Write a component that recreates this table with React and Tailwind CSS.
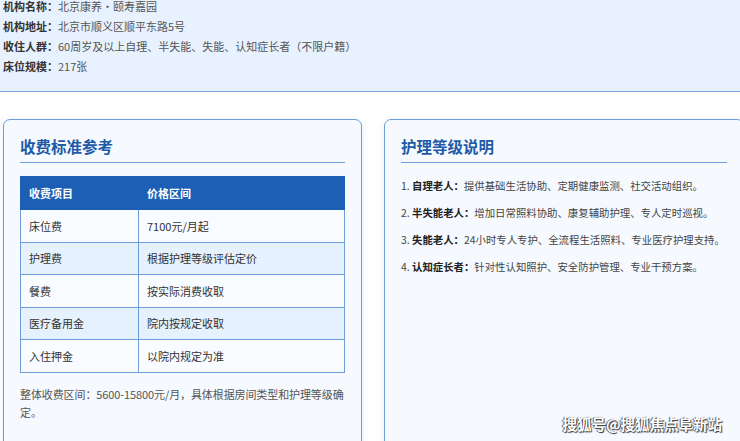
const fees = [
  { item: '床位费', price: '7100元/月起' },
  { item: '护理费', price: '根据护理等级评估定价' },
  { item: '餐费', price: '按实际消费收取' },
  { item: '医疗备用金', price: '院内按规定收取' },
  { item: '入住押金', price: '以院内规定为准' },
];

const levels = [
  { label: '自理老人：', text: '提供基础生活协助、定期健康监测、社交活动组织。' },
  { label: '半失能老人：', text: '增加日常照料协助、康复辅助护理、专人定时巡视。' },
  { label: '失能老人：', text: '24小时专人专护、全流程生活照料、专业医疗护理支持。' },
  { label: '认知症长者：', text: '针对性认知照护、安全防护管理、专业干预方案。' },
];

const info = [
  ['机构名称：', '北京康养·颐寿嘉园'],
  ['机构地址：', '北京市顺义区顺平东路5号'],
  ['收住人群：', '60周岁及以上自理、半失能、失能、认知症长者（不限户籍）'],
  ['床位规模：', '217张'],
];

const App = () => {
  return (
    <div
      className="relative h-[441px] w-[740px] overflow-hidden bg-white text-[11px]"
      style={{ fontFamily: '"Microsoft YaHei", "Noto Sans CJK SC", sans-serif' }}
    >
      <div className="mt-[-4px] border-b border-[#7ea6da] bg-[#e8f2fe] pb-[15px] pl-[3px] leading-[20px]">
        {info.map(([label, value]) => (
          <p key={label} className="text-[#555]">
            <span className="font-bold text-[#333]">{label}</span>
            {value}
          </p>
        ))}
      </div>

      <div className="mt-[27px] flex gap-[22px] pl-[3px]">
        <section className="h-[340px] w-[359px] shrink-0 rounded-[7px] border border-[#6f9ddb] bg-[#f6faff] px-4 pt-[15px] shadow-[0_2px_8px_rgba(30,90,180,0.12)]">
          <h2 className="border-b border-[#6f9ddb] pb-[5px] text-[15.5px] font-bold leading-[22px] text-[#1f5aa8]">
            收费标准参考
          </h2>
          <table className="mt-[13px] w-full border-collapse">
            <thead>
              <tr className="bg-[#1c5fb4] text-left text-white">
                <th className="h-[33px] w-[118px] border border-[#1c5fb4] px-[8px] font-bold">收费项目</th>
                <th className="h-[33px] border border-[#1c5fb4] px-[8px] font-bold">价格区间</th>
              </tr>
            </thead>
            <tbody className="text-[#333]">
              {fees.map((row, i) => (
                <tr key={row.item} className={i % 2 === 1 ? 'bg-[#e6f1fe]' : 'bg-[#f8fbff]'}>
                  <td className="h-[32.5px] border border-[#6f9ddb] px-[8px]">{row.item}</td>
                  <td className="h-[32.5px] border border-[#6f9ddb] px-[8px]">{row.price}</td>
                </tr>
              ))}
            </tbody>
          </table>
          <p className="mt-[12px] leading-[18px] tracking-[-0.1px] text-[#555]">
            整体收费区间：5600-15800元/月，具体根据房间类型和护理等级确定。
          </p>
        </section>

        <section className="h-[340px] w-[360px] shrink-0 rounded-[7px] border border-[#6f9ddb] bg-[#f6faff] px-4 pt-[15px] shadow-[0_2px_8px_rgba(30,90,180,0.12)]">
          <h2 className="border-b border-[#6f9ddb] pb-[5px] text-[15.5px] font-bold leading-[22px] text-[#1f5aa8]">
            护理等级说明
          </h2>
          <ol className="mt-[14px] flex flex-col gap-[9px] whitespace-nowrap text-[10.4px] leading-[18px] text-[#444]">
            {levels.map((lv, i) => (
              <li key={lv.label}>
                {i + 1}. <span className="font-bold text-[#222]">{lv.label}</span>
                {lv.text}
              </li>
            ))}
          </ol>
        </section>
      </div>

      <div
        className="absolute bottom-[6px] right-[18px] text-[14.5px] font-bold text-white"
        style={{ textShadow: '1px 1px 1px #333, -1px 0 1px #555' }}
      >
        搜狐号@搜狐焦点阜新站
      </div>
    </div>
  );
};

export default App;
